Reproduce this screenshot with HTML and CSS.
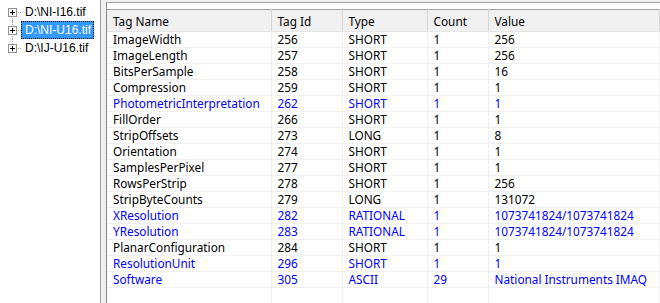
FILE: index.html
```html
<!DOCTYPE html>
<html lang="en">
<head>
  <meta charset="UTF-8">
  <title>TIFF Tags</title>
  <link rel="stylesheet" href="styles.css">
</head>
<body>
  <div class="tree">
    <div class="node">
      <span class="expander"></span>
      <span class="label">D:\NI-I16.tif</span>
    </div>
    <div class="node">
      <span class="expander"></span>
      <span class="label selected">D:\NI-U16.tif</span>
    </div>
    <div class="node last">
      <span class="expander"></span>
      <span class="label">D:\IJ-U16.tif</span>
    </div>
  </div>

  <div class="list">
    <table>
      <colgroup>
        <col class="c-name">
        <col class="c-id">
        <col class="c-type">
        <col class="c-count">
        <col>
      </colgroup>
      <thead>
        <tr><th>Tag Name</th><th>Tag Id</th><th>Type</th><th>Count</th><th>Value</th></tr>
      </thead>
      <tbody>
        <tr><td>ImageWidth</td><td>256</td><td>SHORT</td><td>1</td><td>256</td></tr>
        <tr><td>ImageLength</td><td>257</td><td>SHORT</td><td>1</td><td>256</td></tr>
        <tr><td>BitsPerSample</td><td>258</td><td>SHORT</td><td>1</td><td>16</td></tr>
        <tr><td>Compression</td><td>259</td><td>SHORT</td><td>1</td><td>1</td></tr>
        <tr class="blue"><td>PhotometricInterpretation</td><td>262</td><td>SHORT</td><td>1</td><td>1</td></tr>
        <tr><td>FillOrder</td><td>266</td><td>SHORT</td><td>1</td><td>1</td></tr>
        <tr><td>StripOffsets</td><td>273</td><td>LONG</td><td>1</td><td>8</td></tr>
        <tr><td>Orientation</td><td>274</td><td>SHORT</td><td>1</td><td>1</td></tr>
        <tr><td>SamplesPerPixel</td><td>277</td><td>SHORT</td><td>1</td><td>1</td></tr>
        <tr><td>RowsPerStrip</td><td>278</td><td>SHORT</td><td>1</td><td>256</td></tr>
        <tr><td>StripByteCounts</td><td>279</td><td>LONG</td><td>1</td><td>131072</td></tr>
        <tr class="blue"><td>XResolution</td><td>282</td><td>RATIONAL</td><td>1</td><td>1073741824/1073741824</td></tr>
        <tr class="blue"><td>YResolution</td><td>283</td><td>RATIONAL</td><td>1</td><td>1073741824/1073741824</td></tr>
        <tr><td>PlanarConfiguration</td><td>284</td><td>SHORT</td><td>1</td><td>1</td></tr>
        <tr class="blue"><td>ResolutionUnit</td><td>296</td><td>SHORT</td><td>1</td><td>1</td></tr>
        <tr class="blue"><td>Software</td><td>305</td><td>ASCII</td><td>29</td><td>National Instruments IMAQ</td></tr>
        <tr><td></td><td></td><td></td><td></td><td></td></tr>
      </tbody>
    </table>
  </div>
</body>
</html>
```

FILE: styles.css
```css
body {
  margin: 0;
  width: 660px;
  height: 303px;
  overflow: hidden;
  display: flex;
  background: #f0f0f0;
  font-family: 'Noto Sans', 'Segoe UI', sans-serif;
  font-size: 11.8px;
  color: #000;
}

/* ───────────── tree ───────────── */
.tree {
  width: 101px;
  background: #fff;
  border-right: 1px solid #a0a0a0;
  padding-top: 3px;
  box-sizing: border-box;
  font-family: 'Liberation Sans', Arial, sans-serif;
  font-size: 12px;
}

.node {
  position: relative;
  display: flex;
  align-items: center;
  height: 18px;
}

.node::before {
  content: "";
  position: absolute;
  left: 12px;
  top: 0;
  height: 18px;
  border-left: 1px dotted #a0a0a0;
}

.node:first-child::before {
  top: 9px;
  height: 9px;
}

.node.last::before {
  height: 9px;
}

.expander {
  position: relative;
  z-index: 1;
  width: 9px;
  height: 9px;
  margin-left: 8px;
  box-sizing: border-box;
  border: 1px solid #919191;
  background: #fff;
}

.expander::before,
.expander::after {
  content: "";
  position: absolute;
  background: #000;
}

.expander::before {
  left: 1px;
  top: 3px;
  width: 5px;
  height: 1px;
}

.expander::after {
  left: 3px;
  top: 1px;
  width: 1px;
  height: 5px;
}

.label {
  position: relative;
  margin-left: 4px;
  padding: 0 2px 0 3px;
  line-height: 16px;
  border: 1px dotted transparent;
  white-space: nowrap;
}

.label::before {
  content: "";
  position: absolute;
  left: -4px;
  top: 8px;
  width: 3px;
  border-top: 1px dotted #a0a0a0;
}

.selected {
  background: #3399ff;
  color: #fff;
  border-color: #000;
}

/* ───────────── tag list ───────────── */
.list {
  flex: 1;
  margin-left: 5px;
  margin-top: 2px;
  background: #fff;
  border-top: 1px solid #a0a0a0;
  border-left: 1px solid #828790;
  padding-top: 6px;
  overflow: hidden;
}

table {
  border-collapse: collapse;
  table-layout: fixed;
  width: 100%;
}

.c-name { width: 164px; }
.c-id { width: 71px; }
.c-type { width: 85px; }
.c-count { width: 61px; }

th {
  height: 21px;
  padding: 0 6px;
  text-align: left;
  font-weight: normal;
  background: #f0f0f0;
  border-top: 1px solid #a0a0a0;
  border-right: 1px solid #d5d5d5;
  border-bottom: 1px solid #e5e5e5;
}

td {
  height: 15px;
  padding: 0 6px;
  line-height: 15px;
  white-space: nowrap;
  overflow: hidden;
  border-right: 1px solid #f0f0f0;
  border-bottom: 1px solid #f0f0f0;
}

.blue td {
  color: #0000ff;
}
```
